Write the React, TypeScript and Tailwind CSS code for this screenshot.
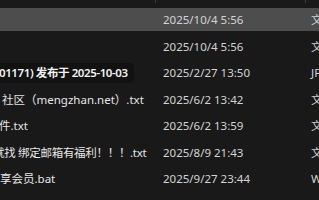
import React from "react";

type Row = {
  name: React.ReactNode;
  date: string;
  type: string;
  selected?: boolean;
};

const rows: Row[] = [
  { name: null, date: "2025/10/4 5:56", type: "文件夹", selected: true },
  { name: null, date: "2025/10/4 5:56", type: "文件夹" },
  {
    name: (
      <span className="inline-flex h-[20px] items-center rounded-[5px] bg-[#121212] pl-[8px] pr-[6px] -ml-[9px] font-semibold tracking-[-0.4px] text-[#f2f2f2]">
        01171) 发布于 2025-10-03
      </span>
    ),
    date: "2025/2/27 13:50",
    type: "JPG 文件",
  },
  {
    name: <span className="ml-[2px]">社区（mengzhan.net）.txt</span>,
    date: "2025/6/2 13:42",
    type: "文本文档",
  },
  {
    name: <span className="-ml-[1px]">件.txt</span>,
    date: "2025/6/2 13:59",
    type: "文本文档",
  },
  {
    name: (
      <span className="-ml-[7px] tracking-[-0.3px]">就找 绑定邮箱有福利！！！.txt</span>
    ),
    date: "2025/8/9 21:43",
    type: "文本文档",
  },
  {
    name: <span>享会员.bat</span>,
    date: "2025/9/27 23:44",
    type: "Windows 批处理文件",
  },
];

export default function App() {
  return (
    <div
      className="w-[319px] h-[200px] overflow-hidden bg-[#191919] text-[11.5px] text-[#dedede]"
      style={{ fontFamily: '"Noto Sans", "Noto Sans CJK SC", sans-serif' }}
    >
      <div className="flex h-[6.5px]">
        <div className="w-[156px] h-[3px] border-r border-[#3a3a3a]" />
        <div className="w-[150px] h-[3px] border-r border-[#3a3a3a]" />
        <div className="flex-1" />
      </div>
      {rows.map((r, i) => (
        <div key={i} className="flex h-[26.5px] items-center">
          <div
            className={
              "flex h-[23px] w-full items-center whitespace-nowrap " +
              (r.selected ? "bg-[#4d4d4d]" : "")
            }
          >
            <div className="flex w-[156px] shrink-0 items-center overflow-hidden text-[#e6e6e6]">
              {r.name}
            </div>
            <div className="w-[150px] shrink-0 pl-[7px] text-[#d4d4d4]">{r.date}</div>
            <div className="flex-1 overflow-hidden pl-[5px] text-[#d4d4d4]">{r.type}</div>
          </div>
        </div>
      ))}
    </div>
  );
}
